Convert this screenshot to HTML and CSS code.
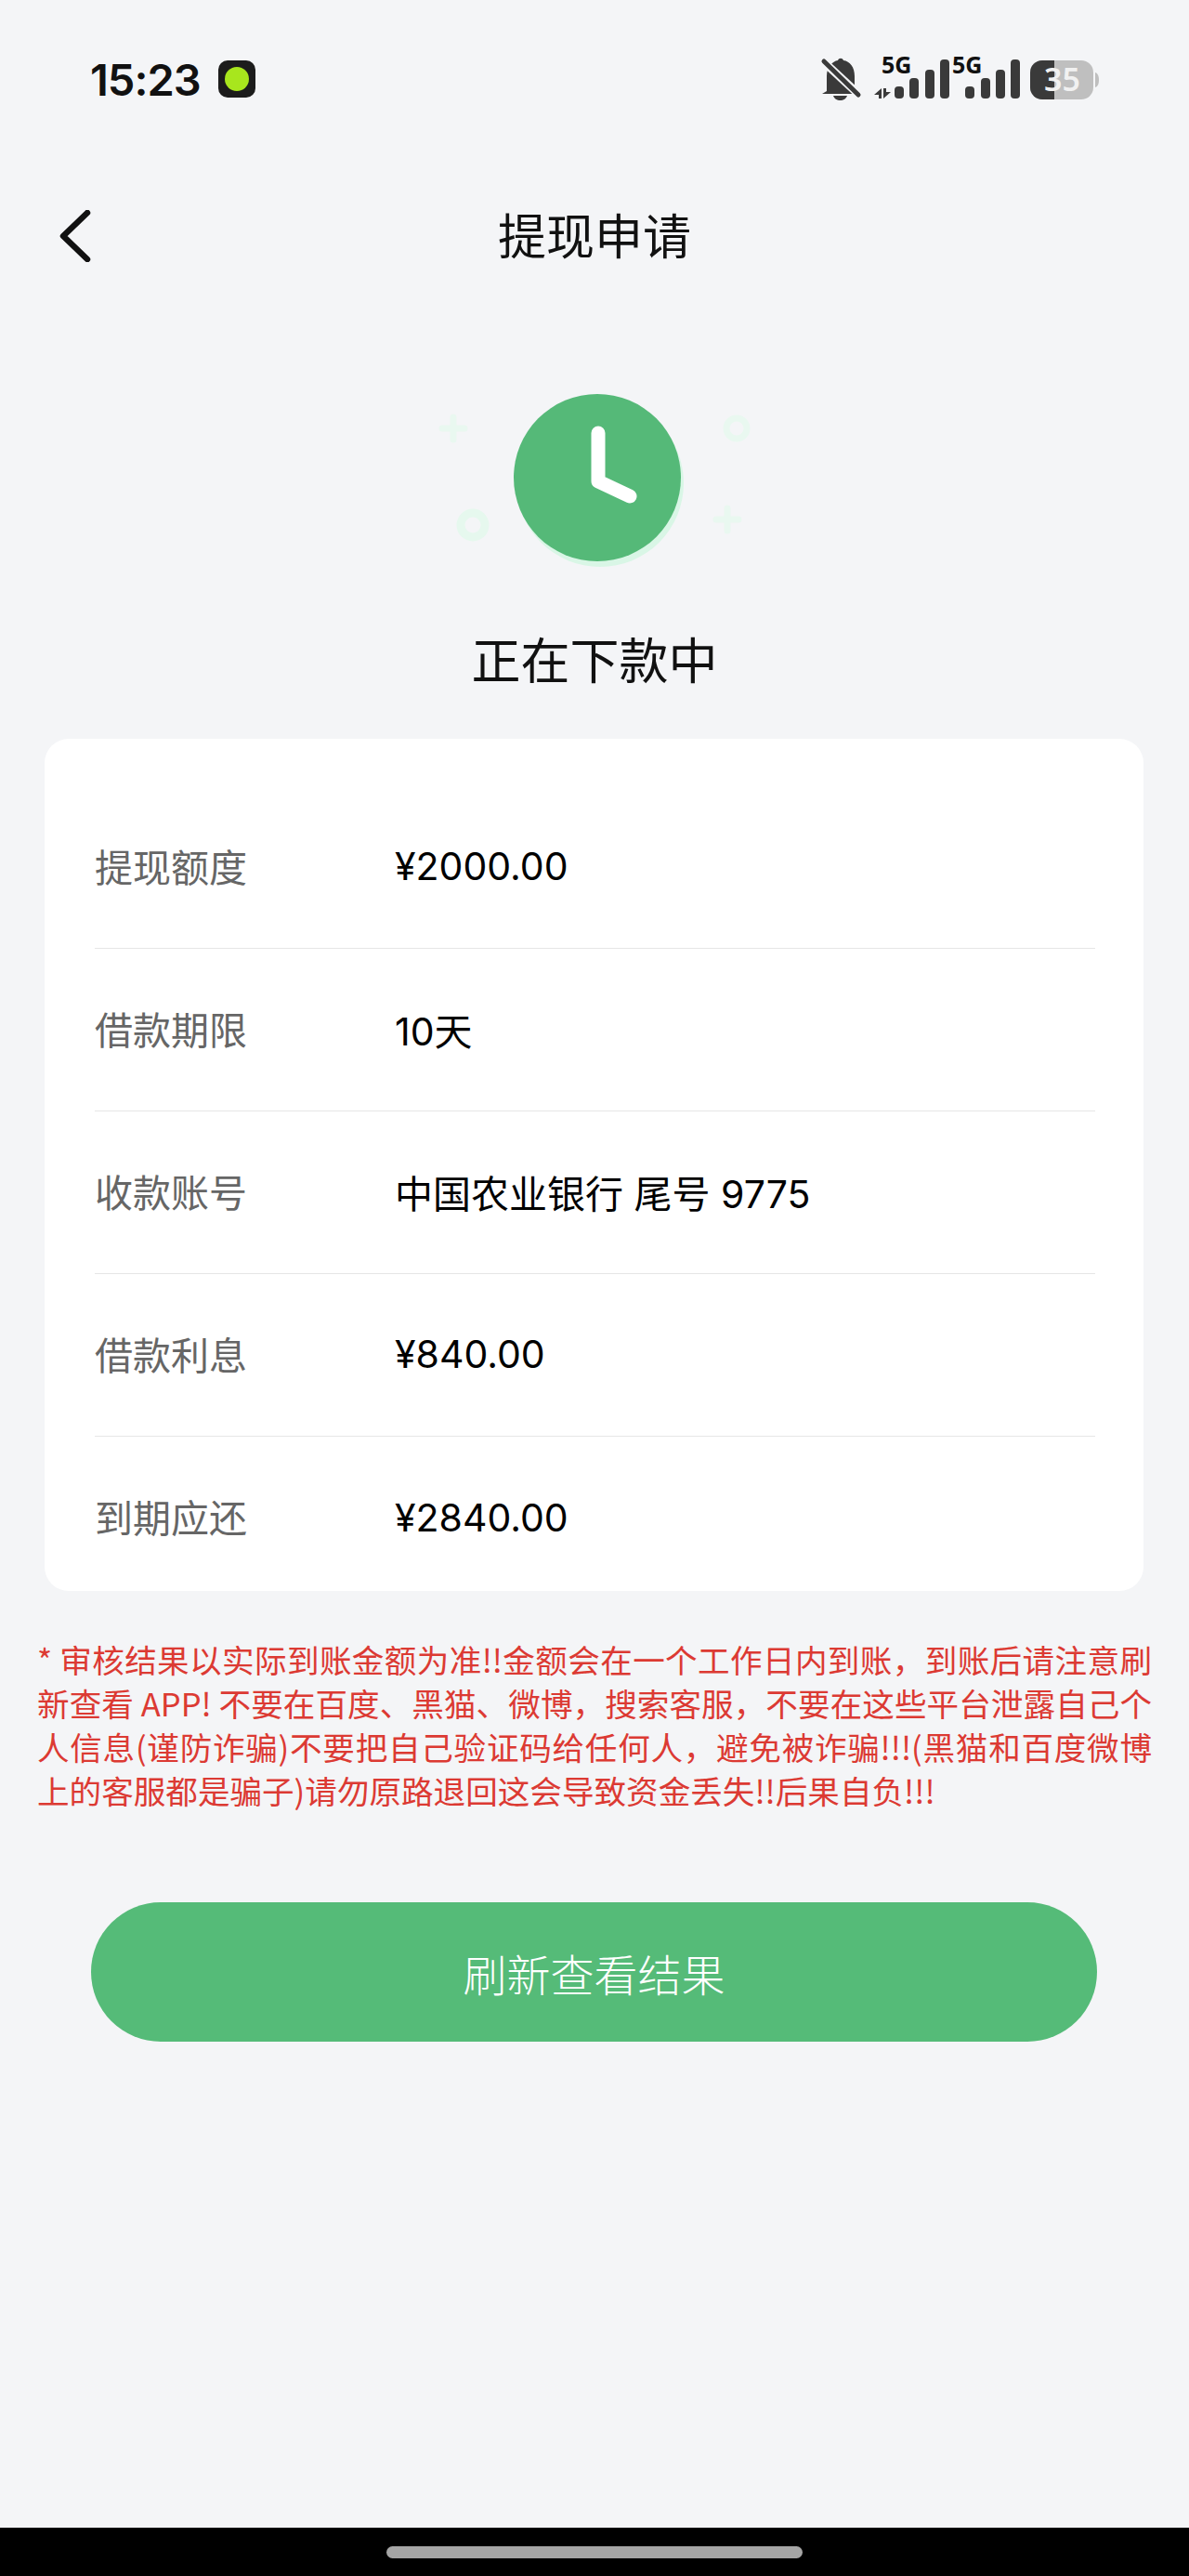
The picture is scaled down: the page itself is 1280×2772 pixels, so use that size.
FILE: index.html
```html
<!DOCTYPE html>
<html lang="zh-CN">
<head>
  <meta charset="UTF-8">
  <meta name="viewport" content="width=device-width, initial-scale=1.0">
  <title>提现申请</title>
  <link rel="stylesheet" href="styles.css">
</head>
<body>
  <div class="page">
    <div class="status-bar">
      <div class="status-left">
        <span class="time">15:23</span>
        <span class="app-dot"><span class="app-dot-inner"></span></span>
      </div>
      <svg class="status-right" width="310" height="80" viewBox="880 45 310 80" fill="none" xmlns="http://www.w3.org/2000/svg">
        <!-- bell -->
        <path d="M890 98V82c0-10 6-16 12-17 1-3 5-3 6 0 7 1 12 7 12 17v16l5 3H885z" fill="#3a3a3a"/>
        <path d="M897 103h15c-1 3-4 5-7.500 5s-6.500-2-7.500-5z" fill="#3a3a3a"/>
        <path d="M884 64L926 103" stroke="#f4f5f7" stroke-width="9"/>
        <path d="M887 66L924 102" stroke="#3a3a3a" stroke-width="5" stroke-linecap="round"/>
        <!-- sim 1 -->
        <text class="net" x="949" y="79">5G</text>
        <path d="M941 102L949 95V106H946V102zM951 95V106L959 99H954V95z" fill="#3a3a3a"/>
        <rect x="963" y="93" width="10" height="13" rx="4" fill="#3a3a3a"/>
        <rect x="979" y="84" width="10" height="22" rx="4" fill="#3a3a3a"/>
        <rect x="996" y="75" width="10" height="31" rx="4" fill="#3a3a3a"/>
        <rect x="1012" y="64" width="10" height="42" rx="4" fill="#3a3a3a"/>
        <!-- sim 2 -->
        <text class="net" x="1025" y="79">5G</text>
        <rect x="1039" y="93" width="10" height="13" rx="4" fill="#3a3a3a"/>
        <rect x="1056" y="84" width="10" height="22" rx="4" fill="#3a3a3a"/>
        <rect x="1072" y="75" width="10" height="31" rx="4" fill="#3a3a3a"/>
        <rect x="1088" y="64" width="10" height="42" rx="4" fill="#3a3a3a"/>
        <!-- battery -->
        <rect x="1109" y="65" width="68" height="42" rx="13" fill="#bfbfbf"/>
        <path d="M1122 65h13v42h-13a13 13 0 0 1-13-13V78a13 13 0 0 1 13-13z" fill="#3a3a3a"/>
        <path d="M1179 78c3 1 4 4 4 8s-1 7-4 8z" fill="#bfbfbf"/>
        <text class="batt" x="1124" y="98">35</text>
      </svg>
    </div>

    <div class="nav-bar">
      <button class="back-btn">
        <svg width="36" height="56" viewBox="0 0 36 56" fill="none" xmlns="http://www.w3.org/2000/svg">
          <path d="M31 3L5 28L31 53" stroke="#111111" stroke-width="6.500" stroke-linecap="round" stroke-linejoin="round"/>
        </svg>
      </button>
      <h1>提现申请</h1>
    </div>

    <div class="hero">
      <svg width="400" height="220" viewBox="0 0 400 220" fill="none" xmlns="http://www.w3.org/2000/svg">
        <path d="M48 49V73M36 61H60M343 147V171M331 159H355" stroke="#e9f8f0" stroke-width="7" stroke-linecap="round"/>
        <circle cx="353" cy="61" r="11" stroke="#e9f8f0" stroke-width="7"/>
        <circle cx="69" cy="165" r="13" stroke="#e6f8ee" stroke-width="9"/>
        <circle cx="206" cy="120" r="90" fill="#d9f6e6"/>
        <circle cx="203" cy="114" r="90" fill="#55b978"/>
        <path d="M204 66V118L238 134" stroke="#ffffff" stroke-width="15" stroke-linecap="round" stroke-linejoin="round"/>
      </svg>
      <h2>正在下款中</h2>
    </div>

    <div class="card">
      <div class="row">
        <span class="label">提现额度</span>
        <span class="value">¥2000.00</span>
      </div>
      <div class="row">
        <span class="label">借款期限</span>
        <span class="value">10天</span>
      </div>
      <div class="row">
        <span class="label">收款账号</span>
        <span class="value">中国农业银行 尾号 9775</span>
      </div>
      <div class="row">
        <span class="label">借款利息</span>
        <span class="value">¥840.00</span>
      </div>
      <div class="row">
        <span class="label">到期应还</span>
        <span class="value">¥2840.00</span>
      </div>
    </div>

    <p class="notice">* 审核结果以实际到账金额为准!!金额会在一个工作日内到账，到账后请注意刷新查看 APP! 不要在百度、黑猫、微博，搜索客服，不要在这些平台泄露自己个人信息(谨防诈骗)不要把自己验证码给任何人，避免被诈骗!!!(黑猫和百度微博上的客服都是骗子)请勿原路退回这会导致资金丢失!!后果自负!!!</p>

    <button class="refresh-btn">刷新查看结果</button>

    <div class="home-bar"><span class="home-pill"></span></div>
  </div>
</body>
</html>
```

FILE: styles.css
```css
* {
  box-sizing: border-box;
}
body {
  margin: 0;
  padding: 0;
  background: #f4f5f7;
  font-family: "Noto Sans CJK SC", "Noto Sans", sans-serif;
}
button {
  background: transparent;
  border: none;
  padding: 0;
  font-family: inherit;
}
h1, h2 {
  margin: 0;
  font-weight: 400;
}

.page {
  display: flex;
  flex-direction: column;
  min-height: 2772px;
}

.status-bar {
  display: flex;
  justify-content: space-between;
  align-items: flex-start;
  height: 190px;
  padding: 45px 90px 0 97px;
}
.status-left {
  display: flex;
  align-items: center;
  gap: 19px;
  height: 80px;
}
.time {
  font-family: Inter, "Noto Sans", sans-serif;
  font-size: 47px;
  font-weight: 600;
  color: #111;
  letter-spacing: -1px;
}
.app-dot {
  display: flex;
  align-items: center;
  justify-content: center;
  width: 40px;
  height: 40px;
  border-radius: 10px;
  background: #1c1c1c;
}
.app-dot-inner {
  width: 26px;
  height: 26px;
  border-radius: 50%;
  background: #a8e61d;
}
.net {
  font-family: "Noto Sans", sans-serif;
  font-size: 25px;
  font-weight: 700;
  fill: #111;
}
.batt {
  font-family: "Noto Sans", sans-serif;
  font-size: 34px;
  font-weight: 600;
  fill: #f1f1f1;
}

.nav-bar {
  display: flex;
  align-items: center;
  justify-content: center;
  position: relative;
  height: 130px;
  padding-bottom: 7px;
}
.nav-bar h1 {
  font-size: 52px;
  color: #111;
}
.back-btn {
  position: absolute;
  left: 63px;
  top: 36px;
  display: flex;
}

.hero {
  display: flex;
  flex-direction: column;
  align-items: center;
  height: 475px;
  padding-top: 80px;
}
.hero svg {
  flex-shrink: 0;
}
.hero h2 {
  margin-top: 49px;
  font-size: 53px;
  line-height: 78px;
  color: #111;
}

.card {
  margin: 0 49px 0 48px;
  padding: 51px 52px 0 54px;
  height: 917px;
  background: #fff;
  border-radius: 26px;
}
.row {
  display: flex;
  align-items: center;
  height: 175px;
  padding-bottom: 5px;
  border-bottom: 1px solid #e6e6e6;
}
.row:last-child {
  border-bottom: none;
}
.label {
  width: 323px;
  font-size: 41px;
  color: #666;
}
.value {
  padding-top: 3px;
  font-family: Inter, "Noto Sans CJK SC", sans-serif;
  font-size: 41px;
  color: #000;
}

.notice {
  margin: 50px 40px 0;
  font-size: 34.6px;
  line-height: 47px;
  color: #dc3a33;
  text-align: justify;
}

.refresh-btn {
  display: block;
  width: 1083px;
  height: 150px;
  margin: 97px 0 0 98px;
  border-radius: 75px;
  background: #55bb78;
  font-size: 47px;
  font-weight: 300;
  color: #fff;
}

.home-bar {
  display: flex;
  justify-content: center;
  align-items: center;
  height: 52px;
  margin-top: auto;
  background: #000;
}
.home-pill {
  width: 448px;
  height: 13px;
  border-radius: 7px;
  background: #a5a5a5;
}
```
